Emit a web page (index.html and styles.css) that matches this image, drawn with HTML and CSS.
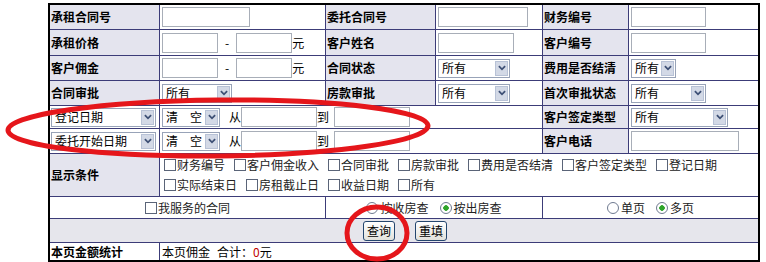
FILE: index.html
```html
<!DOCTYPE html>
<html lang="zh-CN">
<head>
    <meta charset="UTF-8">
    <title>合同查询</title>
    <link rel="stylesheet" href="styles.css">
</head>
<body>
    <div class="page">
        <form class="query" onsubmit="return false">
            <!-- 第一行 -->
            <div class="cell lbl">承租合同号</div>
            <div class="cell"><input class="txt w88" type="text"></div>
            <div class="cell lbl">委托合同号</div>
            <div class="cell"><input class="txt w90" type="text"></div>
            <div class="cell lbl">财务编号</div>
            <div class="cell"><input class="txt w75" type="text"></div>

            <div class="cell lbl">承租价格</div>
            <div class="cell"><input class="txt w56" type="text"><span class="dash">-</span><input class="txt w56" type="text"><span class="unit">元</span></div>
            <div class="cell lbl">客户姓名</div>
            <div class="cell"><input class="txt w76" type="text"></div>
            <div class="cell lbl">客户编号</div>
            <div class="cell"><input class="txt w75" type="text"></div>

            <div class="cell lbl">客户佣金</div>
            <div class="cell"><input class="txt w56" type="text"><span class="dash">-</span><input class="txt w56" type="text"><span class="unit">元</span></div>
            <div class="cell lbl">合同状态</div>
            <div class="cell"><span class="sel w72"><select><option>所有</option></select><span class="arr"><svg viewBox="0 0 9 6"><path d="M1 1l3.5 3.5L8 1"/></svg></span></span></div>
            <div class="cell lbl">费用是否结清</div>
            <div class="cell"><span class="sel w45"><select><option>所有</option></select><span class="arr"><svg viewBox="0 0 9 6"><path d="M1 1l3.5 3.5L8 1"/></svg></span></span></div>

            <div class="cell lbl">合同审批</div>
            <div class="cell"><span class="sel w70"><select><option>所有</option></select><span class="arr"><svg viewBox="0 0 9 6"><path d="M1 1l3.5 3.5L8 1"/></svg></span></span></div>
            <div class="cell lbl">房款审批</div>
            <div class="cell"><span class="sel w72"><select><option>所有</option></select><span class="arr"><svg viewBox="0 0 9 6"><path d="M1 1l3.5 3.5L8 1"/></svg></span></span></div>
            <div class="cell lbl">首次审批状态</div>
            <div class="cell"><span class="sel w75"><select><option>所有</option></select><span class="arr"><svg viewBox="0 0 9 6"><path d="M1 1l3.5 3.5L8 1"/></svg></span></span></div>

            <!-- 日期条件 -->
            <div class="cell lbl pick"><span class="sel w105"><select><option>登记日期</option></select><span class="arr"><svg viewBox="0 0 9 6"><path d="M1 1l3.5 3.5L8 1"/></svg></span></span></div>
            <div class="cell span3">
                <span class="sel w58"><select><option>清　空</option></select><span class="arr"><svg viewBox="0 0 9 6"><path d="M1 1l3.5 3.5L8 1"/></svg></span></span>
                <span class="from">从</span><input class="txt w76" type="text"><span class="to">到</span><input class="txt w76" type="text">
            </div>
            <div class="cell lbl">客户签定类型</div>
            <div class="cell"><span class="sel w97"><select><option>所有</option></select><span class="arr"><svg viewBox="0 0 9 6"><path d="M1 1l3.5 3.5L8 1"/></svg></span></span></div>

            <div class="cell lbl pick"><span class="sel w105"><select><option>委托开始日期</option></select><span class="arr"><svg viewBox="0 0 9 6"><path d="M1 1l3.5 3.5L8 1"/></svg></span></span></div>
            <div class="cell span3">
                <span class="sel w58"><select><option>清　空</option></select><span class="arr"><svg viewBox="0 0 9 6"><path d="M1 1l3.5 3.5L8 1"/></svg></span></span>
                <span class="from">从</span><input class="txt w76" type="text"><span class="to">到</span><input class="txt w76" type="text">
            </div>
            <div class="cell lbl">客户电话</div>
            <div class="cell"><input class="txt w108" type="text"></div>

            <!-- 显示条件 -->
            <div class="cell lbl">显示条件</div>
            <div class="cell span5 checks">
                <label><input type="checkbox">财务编号</label>
                <label><input type="checkbox">客户佣金收入</label>
                <label><input type="checkbox">合同审批</label>
                <label><input type="checkbox">房款审批</label>
                <label><input type="checkbox">费用是否结清</label>
                <label><input type="checkbox">客户签定类型</label>
                <label><input type="checkbox">登记日期</label>
                <label><input type="checkbox">实际结束日</label>
                <label><input type="checkbox">房租截止日</label>
                <label><input type="checkbox">收益日期</label>
                <label><input type="checkbox">所有</label>
            </div>

            <div class="cell span2 center"><label class="opt"><input type="checkbox">我服务的合同</label></div>
            <div class="cell span2 center">
                <label class="opt"><input type="radio" name="fc">按收房查</label>
                <label class="opt"><input type="radio" name="fc" checked>按出房查</label>
            </div>
            <div class="cell span2 center">
                <label class="opt"><input type="radio" name="pg">单页</label>
                <label class="opt"><input type="radio" name="pg" checked>多页</label>
            </div>

            <div class="cell span6 buttons">
                <button type="submit">查询</button>
                <button type="reset">重填</button>
            </div>

            <div class="cell lbl plain">本页金额统计</div>
            <div class="cell span5">本页佣金<span class="sum">合计：<b class="num">0</b>元</span></div>
        </form>

        <!-- 标注圈 -->
        <svg class="marks" viewBox="0 0 766 262">
            <ellipse cx="218" cy="128" rx="210" ry="28" transform="rotate(-0.6 218 128)"/>
            <ellipse cx="377" cy="233" rx="30" ry="26"/>
        </svg>
    </div>
</body>
</html>
```

FILE: styles.css
```css
body {
    margin: 0;
    font-family: "Noto Sans CJK SC", "Liberation Sans", sans-serif;
    font-size: 12px;
    color: #000;
    background-color: #fff;
}
.page {
    position: relative;
    width: 766px;
    height: 262px;
    padding: 3px 0 0 48px;
    box-sizing: border-box;
}
.query {
    display: grid;
    grid-template-columns: 109px 165px 109px 106px 85px 129px;
    grid-template-rows: 24px 25px 24px 24px 22px 24px 42px 21px 23px 17px;
    gap: 1px;
    width: 708px;
    margin: 0;
    background-color: #3c3c78;
    border: 2px solid #000;
}
.cell {
    display: flex;
    align-items: center;
    padding: 0 2px;
    background-color: #fff;
    line-height: 14px;
    white-space: nowrap;
}
.lbl {
    padding: 0 1px;
    background-color: #e4e4ee;
    font-weight: bold;
}
.lbl.plain {
    background-color: #fff;
}
.lbl.pick {
    font-weight: normal;
    background-color: #fff;
}
.span2 { grid-column: span 2; }
.span3 { grid-column: span 3; }
.span5 { grid-column: span 5; }
.span6 { grid-column: span 6; }
.center {
    justify-content: center;
}

.txt {
    height: 20px;
    padding: 0 2px;
    border: 1px solid #a8aeb8;
    box-sizing: border-box;
    font: inherit;
    margin: 0;
}
.w56 { width: 56px; }
.w58 { width: 58px; }
.w70 { width: 70px; }
.w72 { width: 72px; }
.w45 { width: 45px; }
.w75 { width: 75px; }
.w76 { width: 76px; }
.w88 { width: 88px; }
.w90 { width: 90px; }
.w97 { width: 97px; }
.w105 { width: 105px; }
.w108 { width: 108px; }
.dash {
    margin: 0 7px;
}

.sel {
    display: inline-flex;
    align-items: center;
    height: 19px;
    border: 1px solid #98a3b8;
    box-sizing: border-box;
    background-color: #fff;
}
.sel select {
    flex: 1;
    min-width: 0;
    height: 17px;
    padding: 0 0 0 3px;
    margin: 0;
    border: 0;
    background: transparent;
    font: inherit;
    color: #000;
    -webkit-appearance: none;
    appearance: none;
}
.arr {
    display: flex;
    align-items: center;
    justify-content: center;
    width: 13px;
    height: 15px;
    margin-right: 1px;
    background-color: #d3d9e6;
    border: 1px solid #b8c2d6;
    box-sizing: border-box;
}
.arr svg {
    width: 8px;
    height: 6px;
    fill: none;
    stroke: #3d4f75;
    stroke-width: 2;
}
.from {
    margin-left: 9px;
}
.to {
    margin-right: 5px;
}

.checks {
    flex-wrap: wrap;
    align-content: center;
    row-gap: 6px;
    padding-left: 4px;
    color: #222;
    font-weight: normal;
}
.checks label,
.opt {
    display: inline-flex;
    align-items: center;
    margin-right: 9px;
}
.opt {
    color: #222;
}
.opt + .opt {
    margin-left: 2px;
}
.opt:last-child {
    margin-right: 0;
}
input[type="checkbox"],
input[type="radio"] {
    -webkit-appearance: none;
    appearance: none;
    width: 12px;
    height: 12px;
    margin: 0 1px 0 0;
    border: 1px solid #5a6478;
    background-color: #fff;
    box-sizing: border-box;
}
input[type="radio"] {
    border-radius: 50%;
    border-color: #6f7a90;
    margin-right: 2px;
}
input[type="radio"]:checked {
    background: radial-gradient(circle, #2fa52a 0 2.5px, #fff 3px);
}

.buttons {
    justify-content: center;
    gap: 20px;
    padding-left: 4px;
    background-color: #e6e6ec;
}
.buttons button {
    width: 32px;
    height: 20px;
    padding: 0;
    border: 1px solid #24466e;
    border-radius: 3px;
    background: linear-gradient(#fff, #e2e2dc);
    font: inherit;
    color: #000;
    cursor: pointer;
}
.sum {
    margin-left: 7px;
}
.num {
    color: #c00000;
    font-weight: normal;
}

.marks {
    position: absolute;
    top: 0;
    left: 0;
    width: 766px;
    height: 262px;
    pointer-events: none;
    fill: none;
    stroke: #e5161b;
    stroke-width: 5;
}
```
